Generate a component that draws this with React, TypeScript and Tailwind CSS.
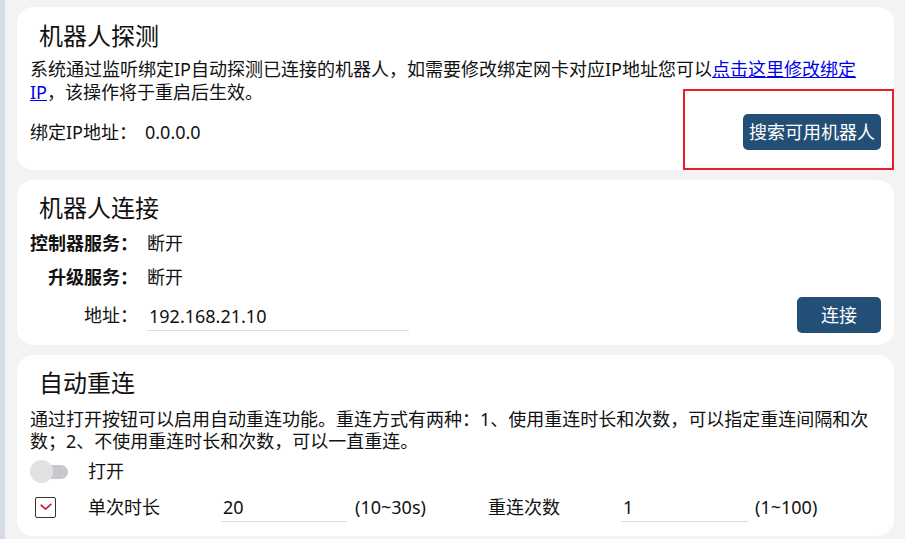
import React from 'react';

const font = "font-['Noto_Sans','Noto_Sans_CJK_SC',sans-serif]";

const Card: React.FC<{ className?: string; children: React.ReactNode }> = ({ className = '', children }) => (
  <div className={`relative bg-white rounded-[16px] px-[13px] ${className}`}>{children}</div>
);

const Title: React.FC<{ children: React.ReactNode }> = ({ children }) => (
  <h2 className="ml-[9px] text-[24px] leading-[32px] font-normal text-[#111]">{children}</h2>
);

const PrimaryButton: React.FC<{ children: React.ReactNode; className?: string }> = ({ children, className = '' }) => (
  <button className={`h-[36px] rounded-[5px] bg-[#234f76] text-white text-[18px] leading-none ${className}`}>
    {children}
  </button>
);

const UnderlineInput: React.FC<{ value: string; className?: string }> = ({ value, className = '' }) => (
  <input
    defaultValue={value}
    className={`h-[30px] border-b border-[#dcdcdc] bg-transparent px-[2px] text-[18px] text-[#111] outline-none ${className}`}
  />
);

export default function App() {
  return (
    <div className={`${font} flex w-[905px] h-[539px] overflow-hidden bg-[#f3f3f3] text-[#111]`}>
      <div className="w-[5px] shrink-0 bg-[#d5dce8]" />
      <div className="flex flex-1 flex-col gap-[10px] pl-[12px] pr-[11px] pt-[7px]">
        {/* 机器人探测 */}
        <Card className="h-[163px] pt-[13px]">
          <Title>机器人探测</Title>
          <p className="mt-[6px] text-[18px] leading-[23px]">
            系统通过监听绑定IP自动探测已连接的机器人，如需要修改绑定网卡对应IP地址您可以
            <a href="#" className="text-[#0000ee] underline">点击这里修改绑定IP</a>
            ，该操作将于重启后生效。
          </p>
          <div className="mt-[10px] flex items-center justify-between">
            <div className="flex items-center text-[18px]">
              <span className="w-[115px]">绑定IP地址：</span>
              <span>0.0.0.0</span>
            </div>
            <PrimaryButton className="w-[138px]">搜索可用机器人</PrimaryButton>
          </div>
          <div className="pointer-events-none absolute right-0 bottom-0 w-[211px] h-[81px] border-2 border-[#e5202a]" />
        </Card>

        {/* 机器人连接 */}
        <Card className="h-[165px] pt-[12px]">
          <Title>机器人连接</Title>
          <div className="mt-[2px] flex h-[34px] items-center">
            <span className="w-[108px] text-right text-[18px] font-bold">控制器服务：</span>
            <span className="ml-[9px] text-[18px]">断开</span>
          </div>
          <div className="flex h-[34px] items-center">
            <span className="w-[108px] text-right text-[18px] font-bold">升级服务：</span>
            <span className="ml-[9px] text-[18px]">断开</span>
          </div>
          <div className="mt-[3px] flex h-[36px] items-center">
            <span className="w-[108px] text-right text-[18px]">地址：</span>
            <UnderlineInput value="192.168.21.10" className="ml-[9px] w-[262px] mt-[2px]" />
            <PrimaryButton className="ml-auto w-[84px]">连接</PrimaryButton>
          </div>
        </Card>

        {/* 自动重连 */}
        <Card className="h-[181px] pt-[12px]">
          <Title>自动重连</Title>
          <p className="mt-[9px] text-[18px] leading-[22px]">
            通过打开按钮可以启用自动重连功能。重连方式有两种：1、使用重连时长和次数，可以指定重连间隔和次数；2、不使用重连时长和次数，可以一直重连。
          </p>
          <div className="mt-[7px] grid grid-cols-[58px_133px_134px_133px_133px_134px_auto] items-center text-[18px]">
            <div className="relative h-[23px] w-[38px]">
              <div className="absolute left-0 right-0 top-[5px] h-[14px] rounded-full bg-[#c6c8cc]" />
              <div className="absolute left-0 top-0 h-[23px] w-[23px] rounded-full bg-[#e2e2e2]" />
            </div>
            <span className="col-span-6 leading-[24px]">打开</span>
          </div>
          <div className="mt-[9px] grid grid-cols-[58px_133px_134px_133px_133px_134px_auto] items-center text-[18px]">
            <div className="ml-[5px] flex h-[21px] w-[21px] items-center justify-center rounded-[2px] border-[1.5px] border-[#333]">
              <svg viewBox="0 0 16 16" className="h-[14px] w-[14px]">
                <path d="M2.5 6 L7.5 10.5 L13.5 5" fill="none" stroke="#c9283c" strokeWidth="2" strokeLinecap="round" strokeLinejoin="round" />
              </svg>
            </div>
            <span>单次时长</span>
            <UnderlineInput value="20" className="w-[126px]" />
            <span>(10~30s)</span>
            <span>重连次数</span>
            <UnderlineInput value="1" className="w-[127px]" />
            <span>(1~100)</span>
          </div>
        </Card>
      </div>
    </div>
  );
}
